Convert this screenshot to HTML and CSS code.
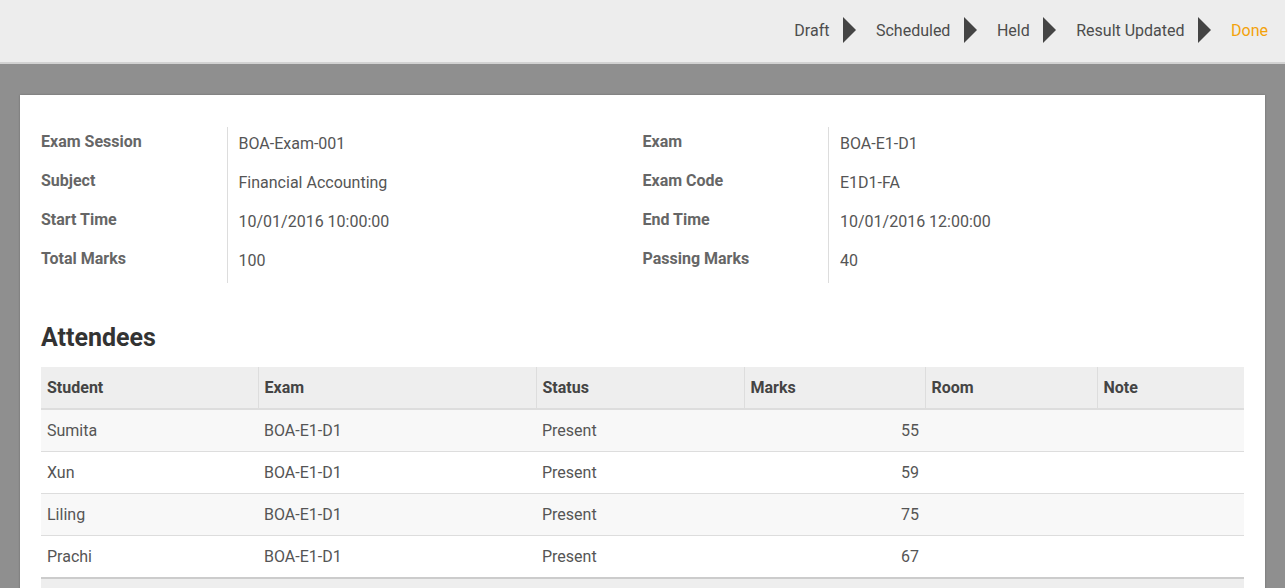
FILE: index.html
```html
<!DOCTYPE html>
<html lang="en">
<head>
    <meta charset="UTF-8">
    <title>BOA-Exam-001</title>
    <link rel="stylesheet" href="styles.css">
</head>
<body>
<header class="statusbar">
    <span class="stage">Draft</span>
    <span class="arrow"></span>
    <span class="stage">Scheduled</span>
    <span class="arrow"></span>
    <span class="stage">Held</span>
    <span class="arrow"></span>
    <span class="stage">Result Updated</span>
    <span class="arrow"></span>
    <span class="stage current">Done</span>
</header>
<div class="sheet-bg">
    <div class="sheet">
        <div class="info">
            <table class="group">
                <tr><td class="label">Exam Session</td><td class="value">BOA-Exam-001</td></tr>
                <tr><td class="label">Subject</td><td class="value">Financial Accounting</td></tr>
                <tr><td class="label">Start Time</td><td class="value">10/01/2016 10:00:00</td></tr>
                <tr><td class="label">Total Marks</td><td class="value">100</td></tr>
            </table>
            <table class="group">
                <tr><td class="label">Exam</td><td class="value">BOA-E1-D1</td></tr>
                <tr><td class="label">Exam Code</td><td class="value">E1D1-FA</td></tr>
                <tr><td class="label">End Time</td><td class="value">10/01/2016 12:00:00</td></tr>
                <tr><td class="label">Passing Marks</td><td class="value">40</td></tr>
            </table>
        </div>
        <h2>Attendees</h2>
        <table class="list">
            <colgroup>
                <col class="c-student">
                <col class="c-exam">
                <col class="c-status">
                <col class="c-marks">
                <col class="c-room">
                <col>
            </colgroup>
            <thead>
                <tr>
                    <th>Student</th>
                    <th>Exam</th>
                    <th>Status</th>
                    <th>Marks</th>
                    <th>Room</th>
                    <th>Note</th>
                </tr>
            </thead>
            <tbody>
                <tr><td>Sumita</td><td>BOA-E1-D1</td><td>Present</td><td class="num">55</td><td></td><td></td></tr>
                <tr><td>Xun</td><td>BOA-E1-D1</td><td>Present</td><td class="num">59</td><td></td><td></td></tr>
                <tr><td>Liling</td><td>BOA-E1-D1</td><td>Present</td><td class="num">75</td><td></td><td></td></tr>
                <tr><td>Prachi</td><td>BOA-E1-D1</td><td>Present</td><td class="num">67</td><td></td><td></td></tr>
            </tbody>
            <tfoot>
                <tr><td></td><td></td><td></td><td></td><td></td><td></td></tr>
            </tfoot>
        </table>
    </div>
</div>
</body>
</html>
```
FILE: styles.css
```css
html, body {
    margin: 0;
    height: 100%;
}
body {
    font-family: Roboto, "Noto Sans", sans-serif;
    background-color: #8f8f8f;
    color: #555;
    overflow: hidden;
}
.statusbar {
    display: flex;
    justify-content: flex-end;
    align-items: center;
    height: 60px;
    padding: 0 17px 2px 0;
    background-color: #ededed;
    border-bottom: 2px solid #d2d2d2;
}
.stage {
    font-size: 16px;
    color: #4c4c4c;
}
.stage.current {
    color: #f3a20a;
}
.arrow {
    width: 0;
    height: 0;
    margin: 0 20px 0 13.5px;
    border-top: 13px solid transparent;
    border-bottom: 13px solid transparent;
    border-left: 13px solid #444;
}
.sheet-bg {
    padding: 31px 20px 0 20px;
}
.sheet {
    background-color: #fff;
    padding: 32px 21px 0 21px;
    min-height: 600px;
    box-shadow: 0 0 2px rgba(0, 0, 0, 0.25);
}
.info {
    display: flex;
    align-items: flex-start;
}
.group {
    flex: 1;
    border-collapse: collapse;
}
.group tr {
    height: 39px;
}
.group td {
    box-sizing: border-box;
    height: 39px;
    padding: 0;
    font-size: 16px;
    vertical-align: top;
}
.group .label {
    width: 186px;
    padding-top: 5px;
    font-weight: bold;
    color: #666;
}
.group .value {
    padding-top: 7px;
    padding-left: 11px;
    border-left: 1px solid #ddd;
    color: #555;
}
h2 {
    margin: 40px 0 15px 0;
    font-size: 25px;
    font-weight: bold;
    color: #333;
}
.list {
    width: 100%;
    table-layout: fixed;
    border-collapse: collapse;
    font-size: 16px;
}
.c-student { width: 217px; }
.c-exam { width: 278px; }
.c-status { width: 208px; }
.c-marks { width: 181px; }
.c-room { width: 172px; }
.list th {
    height: 41px;
    padding: 0 6px;
    text-align: left;
    font-weight: bold;
    color: #444;
    background-color: #eee;
    border-left: 1px solid #ddd;
    border-bottom: 2px solid #ddd;
}
.list th:first-child {
    border-left: none;
}
.list td {
    height: 41px;
    padding: 0 6px;
    color: #555;
    border-bottom: 1px solid #ddd;
}
.list tbody tr:nth-child(odd) td {
    background-color: #f8f8f8;
}
.list td.num {
    text-align: right;
}
.list tfoot td {
    height: 30px;
    background-color: #eee;
    border-top: 2px solid #ccc;
}
```
